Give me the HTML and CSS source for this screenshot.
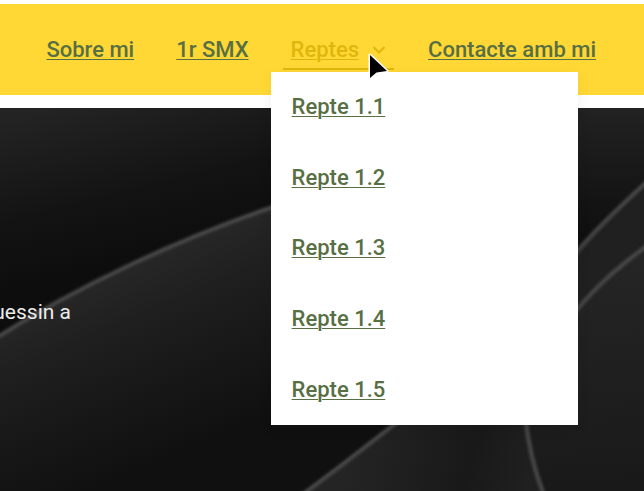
FILE: index.html
```html
<!DOCTYPE html>
<html lang="ca">
<head>
<meta charset="utf-8">
<meta name="viewport" content="width=device-width, initial-scale=1">
<title>Reptes</title>
<link rel="stylesheet" href="styles.css">
</head>
<body>
<header class="site-header">
  <nav class="nav">
    <ul class="nav-list">
      <li class="nav-item"><a class="nav-link" href="#sobre">Sobre mi</a></li>
      <li class="nav-item"><a class="nav-link" href="#smx">1r SMX</a></li>
      <li class="nav-item nav-item-open">
        <a class="nav-link" href="#reptes">Reptes</a>
        <svg class="chevron" viewBox="0 0 14 8" aria-hidden="true"><path d="M1.5 1 L7 6.5 L12.5 1"/></svg>
        <ul class="submenu">
          <li><a class="submenu-link" href="#r1">Repte 1.1</a></li>
          <li><a class="submenu-link" href="#r2">Repte 1.2</a></li>
          <li><a class="submenu-link" href="#r3">Repte 1.3</a></li>
          <li><a class="submenu-link" href="#r4">Repte 1.4</a></li>
          <li><a class="submenu-link" href="#r5">Repte 1.5</a></li>
        </ul>
        <svg class="pointer" viewBox="0 0 24 32" aria-hidden="true"><path d="M3 3 V26 L9.5 20.5 L20 19 Z"/></svg>
      </li>
      <li class="nav-item"><a class="nav-link" href="#contacte">Contacte amb mi</a></li>
    </ul>
  </nav>
</header>
<main class="hero">
  <svg class="hero-art" viewBox="0 108 644 383" preserveAspectRatio="xMidYMid slice" aria-hidden="true">
    <defs>
      <linearGradient id="back" gradientUnits="userSpaceOnUse" x1="60" y1="108" x2="100" y2="270">
        <stop offset="0" stop-color="#232323"/><stop offset=".6" stop-color="#131313"/><stop offset="1" stop-color="#0d0d0d"/>
      </linearGradient>
      <linearGradient id="back-right" gradientUnits="userSpaceOnUse" x1="600" y1="108" x2="600" y2="240">
        <stop offset="0" stop-color="#222"/><stop offset=".7" stop-color="#141414"/><stop offset="1" stop-color="#0f0f0f"/>
      </linearGradient>
      <linearGradient id="leaf" gradientUnits="userSpaceOnUse" x1="110" y1="265" x2="190" y2="450">
        <stop offset="0" stop-color="#282828"/><stop offset=".3" stop-color="#1f1f1f"/><stop offset=".65" stop-color="#171717"/><stop offset="1" stop-color="#101010"/>
      </linearGradient>
      <linearGradient id="fold" gradientUnits="userSpaceOnUse" x1="350" y1="450" x2="530" y2="490">
        <stop offset="0" stop-color="#242424"/><stop offset=".65" stop-color="#191919"/><stop offset="1" stop-color="#202020"/>
      </linearGradient>
      <linearGradient id="right" gradientUnits="userSpaceOnUse" x1="600" y1="260" x2="620" y2="490">
        <stop offset="0" stop-color="#252525"/><stop offset="1" stop-color="#191919"/>
      </linearGradient>
      <filter id="soft" x="-10%" y="-10%" width="120%" height="120%"><feGaussianBlur stdDeviation="1.5"/></filter>
    </defs>
    <rect y="108" width="644" height="383" fill="url(#back)"/>
    <rect x="440" y="108" width="204" height="383" fill="url(#back-right)"/>
    <path d="M0 335 C75 288 175 240 272 206 L440 160 V491 H0Z" fill="url(#leaf)"/>
    <path d="M302 493 C340 465 365 445 396 422 L500 320 L578 253 C600 227 619 207 644 182 V493Z" fill="url(#fold)"/>
    <path d="M525 420 C530 445 534 470 544 493 H644 V246 C615 269 599 283 578 307Z" fill="url(#right)"/>
    <g class="edges" filter="url(#soft)">
      <path d="M-4 338 C75 288 175 240 276 206"/>
      <path d="M302 495 C340 467 365 447 400 420"/>
      <path d="M525 415 C528 443 534 470 544 495"/>
      <path d="M574 255 C598 227 619 207 648 181"/>
      <path d="M574 313 C596 287 614 270 648 245"/>
    </g>
  </svg>
  <p class="hero-text"><span>uessin a</span></p>
</main>
</body>
</html>
```
FILE: styles.css
```css
* { box-sizing: border-box; }

body {
  margin: 0;
  min-height: 100vh;
  display: flex;
  flex-direction: column;
  background: #fff;
  font-family: Roboto, "Liberation Sans", sans-serif;
  font-size: 22px;
  line-height: 24px;
}

ul {
  margin: 0;
  padding: 0;
  list-style: none;
}

.site-header {
  margin: 4px 0 13px;
  padding: 25px 40px;
  background: #ffd835;
}

.nav-list {
  display: flex;
  justify-content: flex-end;
  gap: 26px;
}

.nav-item {
  position: relative;
  display: flex;
  align-items: center;
  gap: 13px;
  padding: 9px 8px 6px;
  border-bottom: 2px solid transparent;
  white-space: nowrap;
}

.nav-link,
.submenu-link {
  color: #576f43;
  font-weight: 500;
  text-decoration: underline;
  text-decoration-thickness: 1px;
  text-underline-offset: 2px;
}

.nav-item-open { border-color: #dfb70c; }
.nav-item-open > .nav-link { color: #dfb70c; }

.chevron {
  width: 14px;
  height: 8px;
  fill: none;
  stroke: #dfb70c;
  stroke-width: 2;
}

.submenu {
  position: absolute;
  top: calc(100% + 4px);
  left: -12px;
  z-index: 1;
  width: 307px;
  height: 353px;
  display: grid;
  grid-auto-rows: 1fr;
  align-items: center;
  padding-left: 21px;
  background: #fff;
  box-shadow: 0 4px 14px rgba(0, 0, 0, 0.06);
}

.pointer {
  position: absolute;
  top: 23px;
  left: 84px;
  z-index: 2;
  width: 24px;
  height: 32px;
  fill: #000;
  stroke: #fff;
  stroke-width: 3;
  stroke-linejoin: round;
  paint-order: stroke;
}

.hero {
  position: relative;
  flex: 1;
  overflow: hidden;
  background: #161616;
}

.hero-art {
  position: absolute;
  inset: 0;
  width: 100%;
  height: 100%;
}

.edges {
  fill: none;
  stroke: #484848;
  stroke-width: 4;
}

.hero-text {
  position: relative;
  display: flex;
  justify-content: flex-end;
  width: 71px;
  margin: 0;
  padding-top: 192px;
  color: #ececec;
  font-size: 21px;
  white-space: nowrap;
}
```
